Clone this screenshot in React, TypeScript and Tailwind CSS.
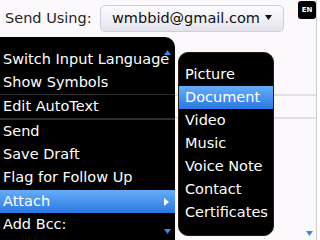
import React from "react";

const mainItems = [
  { label: "Switch Input Language", h: "h-[23px]" },
  { label: "Show Symbols", h: "h-[23px]", sepAfter: "h-px" },
  { label: "Edit AutoText", h: "h-[23px]", sepAfter: "h-[2px]" },
  { label: "Send", h: "h-[23px]" },
  { label: "Save Draft", h: "h-[23px]" },
  { label: "Flag for Follow Up", h: "h-[24px]" },
  { label: "Attach", h: "h-[23px]", active: true, sub: true },
  { label: "Add Bcc:", h: "h-[23px]" },
];

const subItems = [
  "Picture",
  "Document",
  "Video",
  "Music",
  "Voice Note",
  "Contact",
  "Certificates",
];

function Tri({ dir, className }: { dir: "up" | "down" | "right"; className: string }) {
  const pts =
    dir === "up" ? "0,5 3.5,0 7,5" : dir === "down" ? "0,0 7,0 3.5,5" : "0,0 5,4 0,8";
  const w = dir === "right" ? 5 : 7;
  const h = dir === "right" ? 8 : 5;
  return (
    <svg width={w} height={h} viewBox={`0 0 ${w} ${h}`} className={className}>
      <polygon points={pts} />
    </svg>
  );
}

export default function App() {
  return (
    <div className="relative w-[320px] h-[240px] overflow-hidden bg-white font-['DejaVu_Sans',sans-serif]">
      {/* compose form behind the menu */}
      <div className="w-[317px] h-[240px] bg-[#fbf9fb] border-r border-[#cfcdd4]">
        <div className="flex items-start pt-[5px] pl-[5px] h-[32px]">
          <span className="w-[95px] h-[27px] flex items-center text-[14.5px] text-[#262626]">
            Send Using:
          </span>
          <div className="w-[184px] h-[27px] flex items-center justify-between pl-[11px] pr-[11px] rounded-[5px] border border-[#cfcdd6] bg-linear-to-b from-[#fdfdff] to-[#e4e3ec] text-[14.5px] text-[#111]">
            <span>wmbbid@gmail.com</span>
            <Tri dir="down" className="fill-[#111] mt-[-3px]" />
          </div>
          <div className="ml-[14px] mt-[-4px] w-[18px] h-[18px] rounded-[3px] bg-black flex items-center justify-center text-[7px] font-bold text-white leading-none">
            EN
          </div>
        </div>
        <div className="h-[64px] border-b-2 border-[#e2e0e5]" />
        <div className="h-[23px] border-b-2 border-[#e2e0e5]" />
        <div className="flex justify-end pr-[3px] pt-[112px]">
          <Tri dir="down" className="fill-[#3d86e6]" />
        </div>
      </div>

      {/* main menu */}
      <div className="absolute left-0 top-[37px] w-[175px] h-[210px] bg-black rounded-tr-[10px] pt-[11px] text-[14.5px] text-white whitespace-nowrap">
        {mainItems.map((it) => (
          <React.Fragment key={it.label}>
            <div
              className={`relative flex items-center justify-between pl-[3px] pr-[6px] ${it.h} ${
                it.active ? "bg-linear-to-b from-[#66adf8] to-[#2c77e2]" : ""
              }`}
            >
              <span>{it.label}</span>
              {it.sub && <Tri dir="right" className="fill-white" />}
              {it.label === "Switch Input Language" && (
                <Tri dir="up" className="absolute right-[4px] top-[2px] fill-[#3d86e6]" />
              )}
              {it.label === "Add Bcc:" && (
                <Tri dir="down" className="absolute right-[4px] top-[16px] fill-[#3d86e6]" />
              )}
            </div>
            {it.sepAfter && <div className={`${it.sepAfter} bg-[#2e2e2e]`} />}
          </React.Fragment>
        ))}
      </div>

      {/* attach submenu */}
      <div className="absolute left-[178px] top-[52px] w-[96px] h-[184px] bg-black rounded-[10px] border border-[#2a1a0c] pt-[10px] text-[14.5px] text-white">
        {subItems.map((s) => (
          <div
            key={s}
            className={`h-[23px] flex items-center pl-[6px] ${
              s === "Document" ? "bg-linear-to-b from-[#66adf8] to-[#2c77e2]" : ""
            }`}
          >
            {s}
          </div>
        ))}
      </div>
    </div>
  );
}
